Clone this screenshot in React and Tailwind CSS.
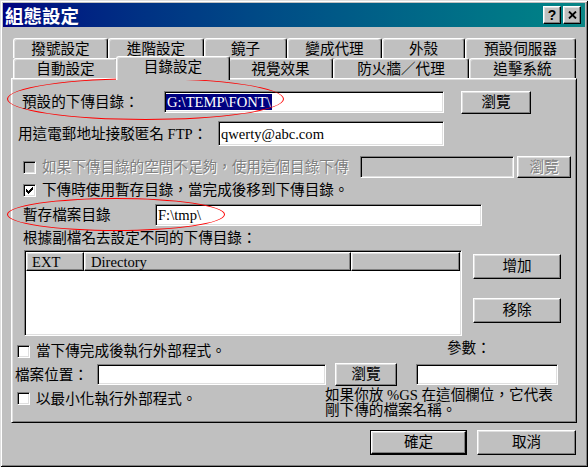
import React from "react";

const raised =
  "border border-t-white border-l-white border-r-black border-b-black shadow-[inset_-1px_-1px_0_#808080,inset_1px_1px_0_#dfdfdf]";
const sunken =
  "border border-t-[#808080] border-l-[#808080] border-r-white border-b-white shadow-[inset_1px_1px_0_#000,inset_-1px_-1px_0_#dfdfdf]";
const greyed = "text-[#808080] [text-shadow:1px_1px_0_#fff]";

const checkPixels = [
  [6, 0], [5, 1], [6, 1], [0, 2], [4, 2], [5, 2], [6, 2], [0, 3], [1, 3], [3, 3], [4, 3],
  [5, 3], [0, 4], [1, 4], [2, 4], [3, 4], [4, 4], [1, 5], [2, 5], [3, 5], [2, 6],
];

function Btn({ children, className = "", disabled }) {
  return (
    <button
      type="button"
      className={`${raised} bg-[#c0c0c0] flex items-center justify-center shrink-0 leading-none ${
        disabled ? greyed : "text-black"
      } ${className}`}
    >
      {children}
    </button>
  );
}

function Field({ children, className = "", disabled }) {
  return (
    <div
      className={`${sunken} ${
        disabled ? "bg-[#c0c0c0]" : "bg-white"
      } flex items-center pl-[2px] shrink-0 overflow-hidden whitespace-nowrap ${className}`}
    >
      {children}
    </div>
  );
}

function Check({ checked, disabled, className = "" }) {
  return (
    <div
      className={`${sunken} w-[13px] h-[13px] shrink-0 flex items-center justify-center ${
        disabled ? "bg-[#c0c0c0]" : "bg-white"
      } ${className}`}
    >
      {checked && (
        <svg width="7" height="7" viewBox="0 0 7 7" shapeRendering="crispEdges">
          {checkPixels.map(([x, y]) => (
            <rect key={`${x}-${y}`} x={x} y={y} width="1" height="1" fill="#000" />
          ))}
        </svg>
      )}
    </div>
  );
}

function Tab({ label, width, active }) {
  return (
    <div
      className={`border-t border-l border-r border-t-white border-l-white border-r-black rounded-t-[3px] shadow-[inset_-1px_0_0_#808080,inset_1px_1px_0_#dfdfdf] bg-[#c0c0c0] flex items-center justify-center whitespace-nowrap shrink-0 ${
        active ? "relative z-10 h-[24px] -mx-[2px] -mb-[2px] pb-[3px]" : "h-[20px]"
      }`}
      style={{ width }}
    >
      {label}
    </div>
  );
}

const backRow = [
  ["撥號設定", 95],
  ["進階設定", 96],
  ["鏡子", 83],
  ["變成代理", 95],
  ["外殼", 83],
  ["預設伺服器", 111],
];
const frontRow = [
  ["自動設定", 105],
  ["目錄設定", 114, true],
  ["視覺效果", 105],
  ["防火牆／代理", 136],
  ["追擊系統", 107],
];

export default function App() {
  return (
    <div className="relative w-[588px] h-[467px] overflow-hidden bg-[#c0c0c0] p-[3px] text-[14.6px] leading-[16px] text-black font-['Liberation_Serif','Noto_Sans_CJK_TC',serif] shadow-[inset_1px_1px_0_#dfdfdf,inset_-1px_-1px_0_#000,inset_2px_2px_0_#fff,inset_-2px_-2px_0_#808080]">
      {/* title bar */}
      <div className="h-[24px] flex items-center pl-[2px] pr-[4px] bg-linear-to-r from-[#000080] to-[#0c8686]">
        <span className="text-white font-bold text-[18.5px] leading-none font-['Noto_Sans_CJK_TC',sans-serif]">
          組態設定
        </span>
        <div className="ml-auto flex gap-[2px]">
          <Btn className="w-[18px] h-[18px] font-bold text-[14px] font-['Liberation_Sans',sans-serif]">?</Btn>
          <Btn className="w-[18px] h-[18px]">
            <svg width="9" height="8" viewBox="0 0 9 8">
              <path d="M1 0.5L8 7.5M8 0.5L1 7.5" stroke="#000" strokeWidth="1.8" />
            </svg>
          </Btn>
        </div>
      </div>

      {/* tabs */}
      <div className="mt-[11px] ml-[10px] w-[563px]">
        <div className="flex">
          {backRow.map(([label, w]) => (
            <Tab key={label} label={label} width={w} />
          ))}
        </div>
        <div className="flex items-end h-[20px]">
          {frontRow.map(([label, w, active]) => (
            <Tab key={label} label={label} width={w} active={active} />
          ))}
        </div>
      </div>

      {/* panel */}
      <div className="ml-[8px] w-[566px] h-[345px] p-[1px] border border-t-white border-l-white border-r-black border-b-black shadow-[inset_1px_1px_0_#dfdfdf,inset_-1px_-1px_0_#808080]">
        <div className="flex items-center h-[26px] mt-[9px]">
          <span className="ml-[9px] w-[142px] whitespace-nowrap">預設的下傳目錄：</span>
          <Field className="w-[280px] h-[22px] !pl-[1px]">
            <span className="bg-[#000080] text-white px-[1px]">G:\TEMP\FONT\</span>
          </Field>
          <Btn className="ml-[17px] w-[70px] h-[23px]">瀏覽</Btn>
        </div>

        <div className="flex items-center h-[25px] mt-[6px]">
          <span className="ml-[5px] w-[200px] whitespace-nowrap">用這電郵地址接駁匿名 FTP：</span>
          <Field className="w-[226px] h-[25px]">qwerty@abc.com</Field>
        </div>

        <div className="flex items-center h-[22px] mt-[10px]">
          <Check disabled className="ml-[10px]" />
          <span className={`ml-[6px] w-[318px] whitespace-nowrap overflow-hidden ${greyed}`}>
            如果下傳目錄的空間不足夠，使用這個目錄下傳
          </span>
          <Field disabled className="w-[154px] h-[22px]" />
          <Btn disabled className="ml-[3px] w-[54px] h-[22px]">瀏覽</Btn>
        </div>

        <div className="flex items-center h-[18px] mt-[3px]">
          <Check checked className="ml-[10px]" />
          <span className="ml-[6px] whitespace-nowrap">下傳時使用暫存目錄，當完成後移到下傳目錄。</span>
        </div>

        <div className="flex items-center h-[22px] mt-[5px]">
          <span className="ml-[10px] w-[132px] whitespace-nowrap">暫存檔案目錄</span>
          <Field className="w-[327px] h-[22px]">F:\tmp\</Field>
        </div>

        <div className="flex items-center h-[16px] mt-[4px]">
          <span className="ml-[10px] whitespace-nowrap">根據副檔名去設定不同的下傳目錄：</span>
        </div>

        <div className="flex items-start h-[86px] mt-[4px]">
          <div className={`${sunken} ml-[11px] w-[438px] h-[86px] bg-white p-[1px]`}>
            <div className="flex h-[19px]">
              <div className={`${raised} bg-[#c0c0c0] w-[58px] pl-[5px] flex items-center`}>EXT</div>
              <div className={`${raised} bg-[#c0c0c0] w-[267px] pl-[6px] flex items-center`}>Directory</div>
              <div className={`${raised} bg-[#c0c0c0] flex-1`} />
            </div>
          </div>
          <div className="ml-[11px] flex flex-col">
            <Btn className="mt-[4px] w-[88px] h-[25px]">增加</Btn>
            <Btn className="mt-[19px] w-[88px] h-[25px]">移除</Btn>
          </div>
        </div>

        <div className="flex items-center h-[16px] mt-[7px]">
          <Check className="ml-[4px]" />
          <span className="ml-[6px] w-[411px] whitespace-nowrap">當下傳完成後執行外部程式。</span>
          <span className="whitespace-nowrap mb-[6px]">參數：</span>
        </div>

        <div className="flex items-center h-[23px] mt-[4px]">
          <span className="ml-[2px] w-[82px] whitespace-nowrap">檔案位置：</span>
          <Field className="w-[229px] h-[21px]" />
          <Btn className="ml-[9px] w-[62px] h-[23px]">瀏覽</Btn>
          <Field className="ml-[19px] w-[142px] h-[21px]" />
        </div>

        <div className="flex items-start mt-[2px]">
          <div className="w-[312px] h-[21px] flex items-center">
            <Check className="ml-[4px]" />
            <span className="ml-[6px] whitespace-nowrap">以最小化執行外部程式。</span>
          </div>
          <p className="leading-[15px] whitespace-nowrap">
            如果你放 %GS 在這個欄位，它代表
            <br />
            剛下傳的檔案名稱。
          </p>
        </div>
      </div>

      {/* dialog buttons */}
      <div className="flex items-center justify-end gap-[11px] mt-[7px] pr-[9px]">
        <Btn className="w-[95px] h-[23px] outline outline-black">確定</Btn>
        <Btn className="w-[99px] h-[25px]">取消</Btn>
      </div>

      {/* red annotation marks */}
      <div className="absolute left-[7px] top-[78px] w-[277px] h-[42px] rounded-[50%] border border-[#ff0000] pointer-events-none" />
      <div className="absolute left-[7px] top-[198px] w-[218px] h-[33px] rounded-[50%] border border-[#ff0000] pointer-events-none" />
    </div>
  );
}
